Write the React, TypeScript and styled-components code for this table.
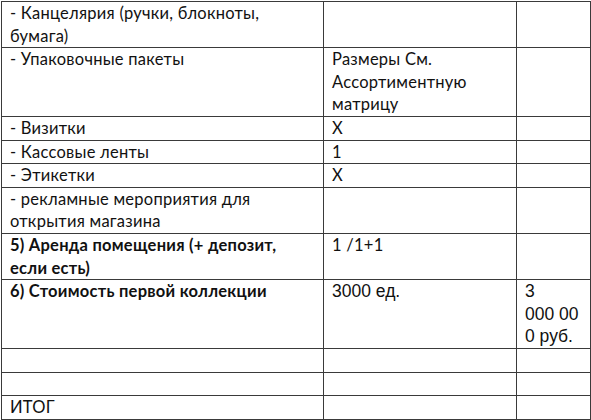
import React from "react";
import styled, { createGlobalStyle } from "styled-components";

type Row = {
  name: React.ReactNode;
  bold?: boolean;
  qty?: React.ReactNode;
  sum?: React.ReactNode;
  plain?: boolean;
};

const rows: Row[] = [
  { name: "- Канцелярия (ручки, блокноты, бумага)" },
  {
    name: "- Упаковочные пакеты",
    qty: (
      <>
        Размеры См.
        <br />
        Ассортиментную
        <br />
        матрицу
      </>
    ),
  },
  { name: "- Визитки", qty: "Х" },
  { name: "- Кассовые ленты", qty: "1" },
  { name: "- Этикетки", qty: "Х" },
  { name: "- рекламные мероприятия для открытия магазина" },
  { name: "5) Аренда помещения (+ депозит, если есть)", bold: true, qty: "1 /1+1" },
  {
    name: "6) Стоимость первой коллекции",
    bold: true,
    qty: "3000 ед.",
    plain: true,
    sum: (
      <>
        3
        <br />
        000 00
        <br />0 руб.
      </>
    ),
  },
  { name: "" },
  { name: "" },
  { name: "ИТОГ" },
];

const App = () => {
  return (
    <Page>
      <GlobalStyle />
      <Table>
        <colgroup>
          <Col $w={322} />
          <Col $w={193} />
          <Col $w={74} />
        </colgroup>
        <tbody>
          {rows.map((r, i) => (
            <tr key={i}>
              <Cell $bold={r.bold}>{r.name || "\u00a0"}</Cell>
              <Cell $plain={r.plain}>{r.qty || "\u00a0"}</Cell>
              <Cell $plain={r.plain}>{r.sum || "\u00a0"}</Cell>
            </tr>
          ))}
        </tbody>
      </Table>
    </Page>
  );
};

const GlobalStyle = createGlobalStyle`
  body {
    margin: 0;
    background: #fff;
  }
`;

const Page = styled.div`
  padding: 1px 0 0 1px;
  background: #fff;
`;

const Table = styled.table`
  border-collapse: collapse;
  table-layout: fixed;
  width: 589px;
`;

const Col = styled.col<{ $w: number }>`
  width: ${(p) => p.$w}px;
`;

const Cell = styled.td<{ $bold?: boolean; $plain?: boolean }>`
  border: 1px solid #3a3a3a;
  padding: 0 8px;
  vertical-align: top;
  font-family: ${(p) => (p.$plain ? '"Liberation Sans", Arial, sans-serif' : "Lato, sans-serif")};
  font-size: ${(p) => (p.$plain ? "17.5px" : "16.5px")};
  letter-spacing: ${(p) => (p.$plain ? "0" : "0.25px")};
  font-weight: ${(p) => (p.$bold ? 700 : 400)};
  line-height: 22.6px;
  color: #111;
  overflow: hidden;
`;

export default App;
